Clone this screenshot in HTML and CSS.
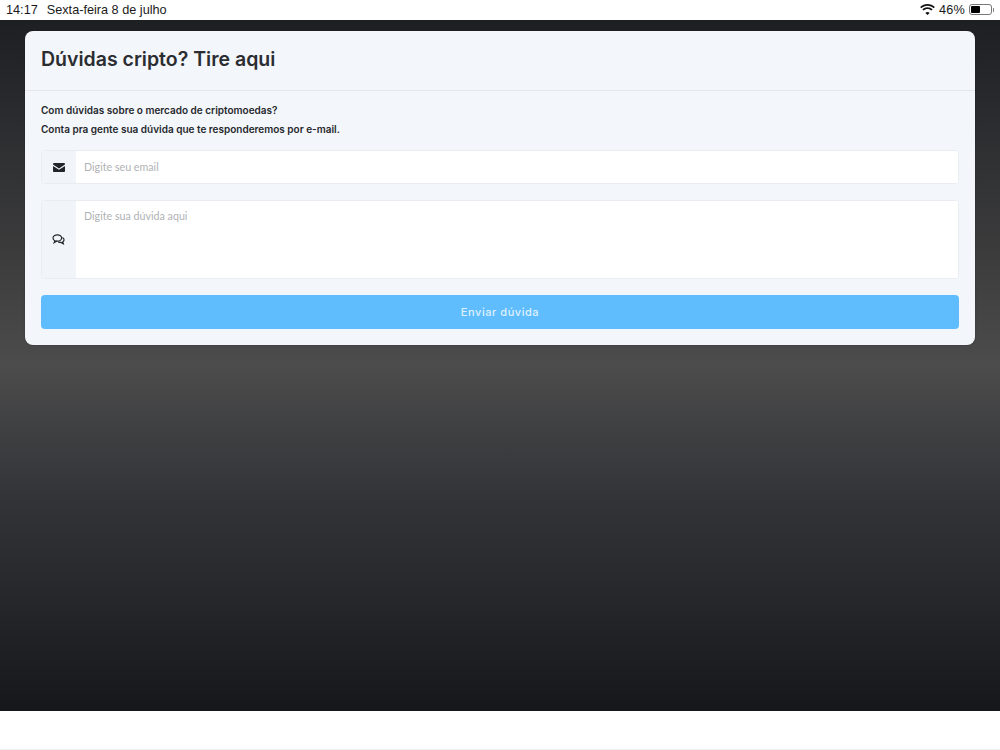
FILE: index.html
```html
<!DOCTYPE html>
<html lang="pt">
<head>
<meta charset="utf-8">
<title>Dúvidas cripto</title>
<link rel="stylesheet" href="styles.css">
</head>
<body>
<div class="statusbar">
  <div class="status-left"><span class="time">14:17</span><span>Sexta-feira 8 de julho</span></div>
  <div class="status-right">
    <svg class="wifi" viewBox="0 0 16 12" width="15" height="11"><path fill="#111" d="M8 2C5.400 2 3 3 1.200 4.700L0 3.400C2.100 1.300 5 0 8 0s5.900 1.300 8 3.400l-1.200 1.300C13 3 10.600 2 8 2zM8 5.500c-1.700 0-3.200.6-4.300 1.700L2.400 5.900C3.900 4.500 5.900 3.600 8 3.600s4.100.9 5.600 2.300l-1.300 1.300C11.200 6.100 9.700 5.500 8 5.500zM8 8.800c-.9 0-1.700.3-2.300.9L8 12l2.300-2.300c-.6-.6-1.400-.9-2.300-.9z"/></svg>
    <span class="pct">46%</span>
    <span class="battery"><span class="battery-fill"></span></span><span class="battery-tip"></span>
  </div>
</div>
<main class="stage">
  <section class="card">
    <header class="card-head"><h1>Dúvidas cripto? Tire aqui</h1></header>
    <div class="card-body">
      <p class="intro">Com dúvidas sobre o mercado de criptomoedas?</p>
      <p class="intro">Conta pra gente sua dúvida que te responderemos por e-mail.</p>
      <div class="field field-email">
        <span class="addon">
          <svg viewBox="0 0 16 12" width="12" height="9"><path fill="#212529" d="M1.500 0h13C15.300 0 16 .7 16 1.500v.6L8 7.200 0 2.100v-.6C0 .7.700 0 1.500 0zM0 4l8 5 8-5v6.500c0 .8-.7 1.500-1.500 1.500h-13C.7 12 0 11.300 0 10.500z"/></svg>
        </span>
        <input class="control" type="text" placeholder="Digite seu email">
      </div>
      <div class="field field-text">
        <span class="addon">
          <svg class="chat" viewBox="0 0 16 14" width="13" height="11"><g fill="none" stroke="#212529" stroke-width="1.500"><ellipse cx="6.500" cy="5" rx="5.500" ry="4"/><path d="M3.500 8.500 2.500 11l3.500-2"/><path d="M13 4.500c1.500.8 2.200 2 2 3.200-.2 1-.8 1.700-1.500 2.200l.7 2.600-3.200-1.800c-1.300.1-2.500-.2-3.300-.9"/></g></svg>
        </span>
        <textarea class="control" placeholder="Digite sua dúvida aqui"></textarea>
      </div>
      <button class="submit" type="button">Enviar dúvida</button>
    </div>
  </section>
</main>
<div class="bottom"></div>
</body>
</html>
```
FILE: styles.css
```css
* { box-sizing: border-box; }
html, body { margin: 0; padding: 0; height: 750px; overflow: hidden; background: #fff; }
body { font-family: "Inter", "Liberation Sans", sans-serif; color: #212529; display: flex; flex-direction: column; }
.statusbar { height: 20px; flex: none; display: flex; justify-content: space-between; align-items: center; padding: 0 6px 1px 6px; font-family: "Liberation Sans", Arial, sans-serif; font-size: 12.700px; color: #1a1a1a; }
.status-left { display: flex; gap: 9px; }
.status-right { display: flex; align-items: center; gap: 3px; }
.pct { margin-left: 1px; margin-right: 1px; letter-spacing: .2px; }
.battery { width: 23px; height: 11px; border: 1px solid #777; border-radius: 3px; padding: 1px; display: block; }
.battery-fill { display: block; width: 9px; height: 100%; background: #000; border-radius: 1px; }
.battery-tip { width: 1px; height: 4px; background: #888; margin-left: -2px; }
.stage { height: 691px; flex: none; padding: 11px 25px 0; background: linear-gradient(180deg, #1e1f23 0, #2f3032 19%, #3b3b3c 33%, #4c4c4c 50%, #333438 69%, #25272a 84%, #15171b 100%); }
.card { background: #f3f6fb; border-radius: 8px; overflow: hidden; height: 314px; box-shadow: 0 0 2px rgba(0,0,0,.3); }
.card-head { height: 60px; padding: 0 16px 3px; display: flex; align-items: center; border-bottom: 1px solid #e3e6ea; }
h1 { margin: 0; font-size: 19.500px; font-weight: 600; color: #2b2d30; }
.card-body { padding: 10px 16px 0; display: flex; flex-direction: column; }
.intro { margin: 0; font-size: 10px; font-weight: 600; line-height: 19px; height: 19px; color: #26282b; }
.field { display: flex; border: 1px solid #e9edf2; border-radius: 4px; overflow: hidden; background: #fff; }
.field-email { height: 34px; margin-top: 11px; }
.field-text { height: 79px; margin-top: 16px; }
.addon { width: 34px; flex: none; display: flex; align-items: center; justify-content: center; background: #f1f4f8; }
.chat { margin-right: 2px; }
.control { flex: 1; min-width: 0; border: 0; outline: 0; background: #fff; padding: 0 8px 2px; font-family: "Lato", sans-serif; font-size: 10.700px; resize: none; }
textarea.control { padding-top: 8px; }
.control::placeholder { color: #b0b2b5; opacity: 1; }
.submit { height: 34px; margin-top: 16px; border: 0; border-radius: 4px; background: #5fbdfd; color: #dff1ff; font-family: "Inter", sans-serif; font-size: 11px; font-weight: 500; letter-spacing: .55px; }
.bottom { flex: 1; background: #fff; border-bottom: 1px solid #f0f0f0; }
```
